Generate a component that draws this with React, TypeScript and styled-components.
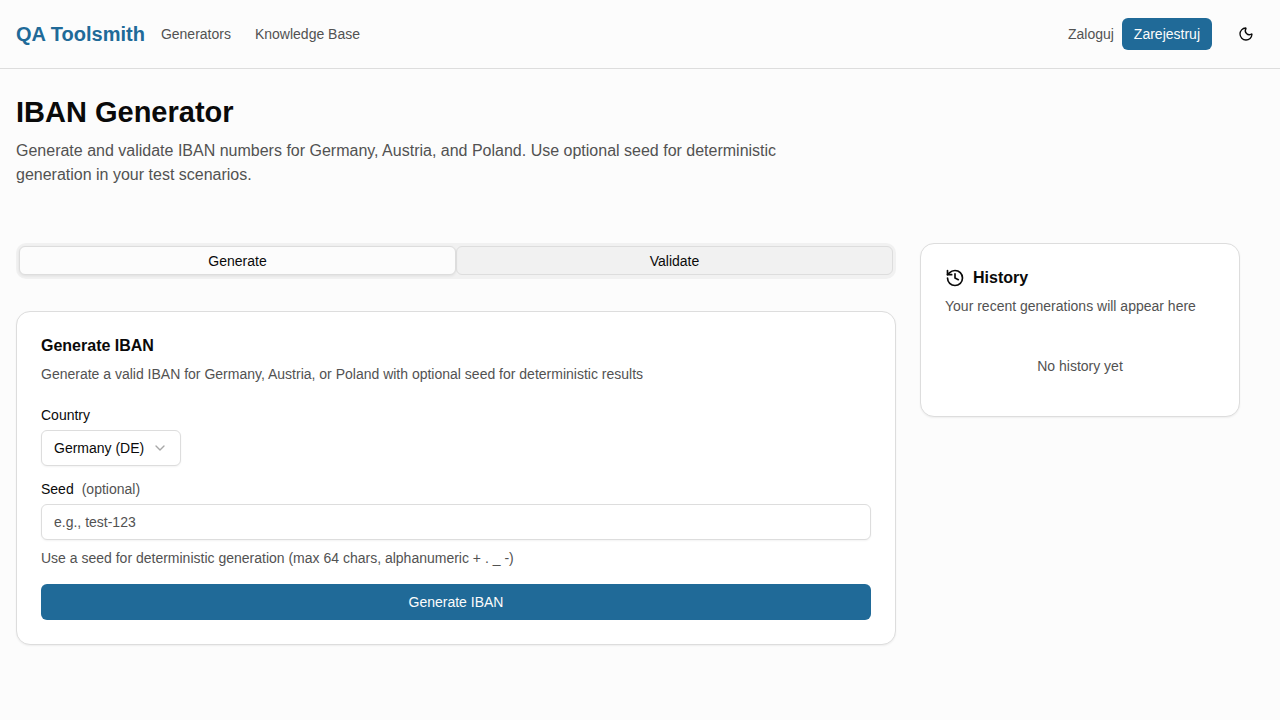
import React, { useState } from "react";
import styled, { createGlobalStyle } from "styled-components";
import { ChevronDown, History, Moon } from "lucide-react";

const color = {
  page: "#fcfcfc",
  card: "#ffffff",
  text: "#0a0a0a",
  muted: "#525252",
  border: "#dddddd",
  track: "#f1f1f1",
  primary: "#206a98",
};

const GlobalStyle = createGlobalStyle`
  *, *::before, *::after { box-sizing: border-box; }
  body {
    margin: 0;
    background: ${color.page};
    color: ${color.text};
    font-family: "Liberation Sans", Arial, sans-serif;
    font-size: 14px;
    line-height: 20px;
  }
  h1, h2, p { margin: 0; }
  button, input, select { font: inherit; color: inherit; }
`;

const Header = styled.header`
  display: flex;
  align-items: center;
  justify-content: space-between;
  flex-wrap: wrap;
  gap: 16px;
  padding: 16px;
  border-bottom: 1px solid ${color.border};
`;

const Cluster = styled.div`
  display: flex;
  align-items: center;
  gap: 16px;
`;

const Brand = styled.a`
  color: ${color.primary};
  font-size: 20px;
  font-weight: 700;
  line-height: 28px;
  text-decoration: none;
`;

const Nav = styled.nav`
  display: flex;
  gap: 24px;
`;

const TextLink = styled.a`
  color: ${color.muted};
  text-decoration: none;
`;

const Account = styled.div`
  display: flex;
  align-items: center;
  gap: 8px;
`;

const SignUp = styled.a`
  padding: 6px 12px;
  border-radius: 6px;
  background: ${color.primary};
  color: ${color.page};
  text-decoration: none;
`;

const IconButton = styled.button`
  display: grid;
  place-items: center;
  width: 36px;
  height: 36px;
  padding: 0;
  border: 0;
  border-radius: 6px;
  background: transparent;
`;

const Main = styled.main`
  padding: 24px 40px 24px 16px;
`;

const Intro = styled.div`
  display: grid;
  gap: 8px;
  max-width: 768px;
  margin-bottom: 56px;
`;

const PageTitle = styled.h1`
  font-size: 29px;
  font-weight: 700;
  line-height: 38px;
`;

const Lead = styled.p`
  color: ${color.muted};
  font-size: 16px;
  line-height: 24px;
`;

const Columns = styled.div`
  display: grid;
  grid-template-columns: minmax(0, 1fr) 320px;
  align-items: start;
  gap: 24px;
  @media (max-width: 800px) {
    grid-template-columns: minmax(0, 1fr);
  }
`;

const Workspace = styled.div`
  display: grid;
  gap: 32px;
`;

const TabList = styled.div`
  display: grid;
  grid-template-columns: 1fr 1fr;
  height: 36px;
  padding: 3px 3px 4px;
  border-radius: 10px;
  background: ${color.track};
`;

const Tab = styled.button<{ $active: boolean }>`
  padding: 0 8px;
  border: 1px solid ${color.border};
  border-radius: 6px;
  background: ${(p) => (p.$active ? color.page : "transparent")};
  box-shadow: ${(p) => (p.$active ? "0 1px 3px rgba(0, 0, 0, 0.08)" : "none")};
`;

const Card = styled.section`
  display: grid;
  gap: 24px;
  padding: 24px;
  border: 1px solid ${color.border};
  border-radius: 14px;
  background: ${color.card};
  box-shadow: 0 1px 2px rgba(0, 0, 0, 0.06);
`;

const CardHeader = styled.div`
  display: grid;
  gap: 8px;
`;

const CardTitle = styled.h2`
  display: flex;
  align-items: center;
  gap: 8px;
  font-size: 16px;
  font-weight: 700;
  line-height: 20px;
`;

const Muted = styled.p`
  color: ${color.muted};
`;

const Empty = styled(Muted)`
  padding: 16px 0;
  text-align: center;
`;

const Form = styled.form`
  display: grid;
  gap: 16px;
`;

const Field = styled.div`
  display: grid;
  gap: 8px;
`;

const Label = styled.label`
  display: flex;
  gap: 8px;
  line-height: 14px;
`;

const Optional = styled.span`
  color: ${color.muted};
`;

const SelectWrap = styled.div`
  position: relative;
  width: 140px;
`;

const Select = styled.select`
  appearance: none;
  display: block;
  width: 100%;
  height: 36px;
  padding: 0 32px 0 12px;
  border: 1px solid ${color.border};
  border-radius: 6px;
  background: ${color.card};
  box-shadow: 0 1px 2px rgba(0, 0, 0, 0.05);
`;

const Chevron = styled(ChevronDown)`
  position: absolute;
  top: 10px;
  right: 13px;
  color: ${color.muted};
  opacity: 0.5;
  pointer-events: none;
`;

const Input = styled.input`
  width: 100%;
  height: 36px;
  padding: 4px 12px;
  border: 1px solid ${color.border};
  border-radius: 6px;
  background: ${color.card};
  box-shadow: 0 1px 2px rgba(0, 0, 0, 0.05);
  &::placeholder {
    color: ${color.muted};
    opacity: 1;
  }
`;

const Submit = styled.button`
  height: 36px;
  padding: 0 16px;
  border: 0;
  border-radius: 6px;
  background: ${color.primary};
  color: ${color.page};
`;

export default function App() {
  const [tab, setTab] = useState("Generate");
  return (
    <>
      <GlobalStyle />
      <Header>
        <Cluster>
          <Brand href="#">QA Toolsmith</Brand>
          <Nav>
            <TextLink href="#generators">Generators</TextLink>
            <TextLink href="#knowledge">Knowledge Base</TextLink>
          </Nav>
        </Cluster>
        <Cluster>
          <Account>
            <TextLink href="#login">Zaloguj</TextLink>
            <SignUp href="#register">Zarejestruj</SignUp>
          </Account>
          <IconButton type="button" aria-label="Toggle theme">
            <Moon size={16} />
          </IconButton>
        </Cluster>
      </Header>
      <Main>
        <Intro>
          <PageTitle>IBAN Generator</PageTitle>
          <Lead>
            Generate and validate IBAN numbers for Germany, Austria, and Poland. Use optional seed
            for deterministic generation in your test scenarios.
          </Lead>
        </Intro>
        <Columns>
          <Workspace>
            <TabList role="tablist">
              {["Generate", "Validate"].map((name) => (
                <Tab
                  key={name}
                  type="button"
                  role="tab"
                  aria-selected={tab === name}
                  $active={tab === name}
                  onClick={() => setTab(name)}
                >
                  {name}
                </Tab>
              ))}
            </TabList>
            <Card>
              <CardHeader>
                <CardTitle>Generate IBAN</CardTitle>
                <Muted>
                  Generate a valid IBAN for Germany, Austria, or Poland with optional seed for
                  deterministic results
                </Muted>
              </CardHeader>
              <Form onSubmit={(e) => e.preventDefault()}>
                <Field>
                  <Label htmlFor="country">Country</Label>
                  <SelectWrap>
                    <Select id="country" defaultValue="DE">
                      <option value="DE">Germany (DE)</option>
                      <option value="AT">Austria (AT)</option>
                      <option value="PL">Poland (PL)</option>
                    </Select>
                    <Chevron size={16} aria-hidden />
                  </SelectWrap>
                </Field>
                <Field>
                  <Label htmlFor="seed">
                    Seed <Optional>(optional)</Optional>
                  </Label>
                  <Input
                    id="seed"
                    type="text"
                    maxLength={64}
                    placeholder="e.g., test-123"
                    aria-describedby="seed-help"
                  />
                  <Muted id="seed-help">
                    Use a seed for deterministic generation (max 64 chars, alphanumeric + . _ -)
                  </Muted>
                </Field>
                <Submit type="submit">Generate IBAN</Submit>
              </Form>
            </Card>
          </Workspace>
          <Card as="aside">
            <CardHeader>
              <CardTitle>
                <History size={20} aria-hidden />
                History
              </CardTitle>
              <Muted>Your recent generations will appear here</Muted>
            </CardHeader>
            <Empty>No history yet</Empty>
          </Card>
        </Columns>
      </Main>
    </>
  );
}
